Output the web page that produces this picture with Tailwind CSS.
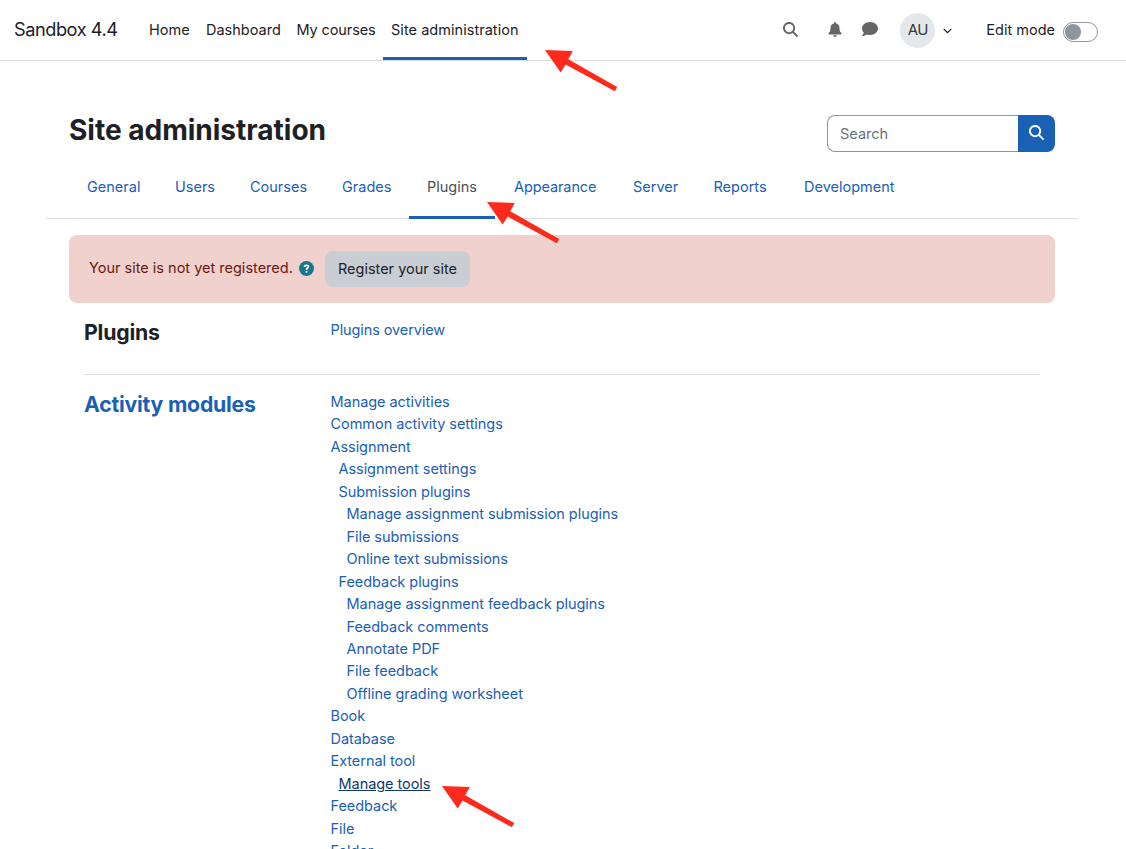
<!DOCTYPE html>
<html lang="en">
<head>
<meta charset="utf-8">
<title>Site administration</title>
<script src="https://cdn.jsdelivr.net/npm/@tailwindcss/browser@4"></script>
</head>
<body class="h-[849px] overflow-hidden bg-white font-['Inter',sans-serif] text-[14.5px] leading-[22.47px] text-[#1d2125]">
<div class="relative h-[849px] overflow-hidden whitespace-nowrap">
<header class="flex h-[61px] items-stretch border-b border-[#d5dbdf]">
  <a class="flex w-[127px] shrink-0 items-center pb-[2px] pl-3.5 text-[18.2px] tracking-[-0.46px]">Sandbox 4.4</a>
  <nav class="ml-3.5 flex">
    <a class="flex w-[57px] items-center pl-2">Home</a>
    <a class="flex w-[90.5px] items-center pl-2">Dashboard</a>
    <a class="flex w-[94.5px] items-center pl-2 tracking-[-0.1px]">My courses</a>
    <a class="flex w-[144px] items-center border-b-[3px] border-[#1a60b4] pt-[3px] pl-2 tracking-[0.04px]">Site administration</a>
  </nav>
  <div class="ml-auto flex items-center text-[#666]">
    <svg class="mr-[30px] mb-[2px] size-[15px]" viewBox="0 0 512 512" fill="currentColor"><path d="M416 208c0 45.9-14.9 88.3-40 122.7L502.6 457.4c12.5 12.5 12.5 32.8 0 45.3s-32.8 12.5-45.3 0L330.7 376c-34.4 25.2-76.8 40-122.7 40C93.1 416 0 322.9 0 208S93.1 0 208 0S416 93.1 416 208zM208 352a144 144 0 1 0 0-288 144 144 0 1 0 0 288z"/></svg>
    <svg class="mr-[20px] mb-px h-[15px] w-[14px]" viewBox="0 0 14 15" fill="currentColor"><path d="M7 0C7.600 0 8 .400 8 .900V1.600C10.300 2.100 11.500 3.800 11.500 6C11.500 8.400 12 9.700 13.200 10.800C13.900 11.500 13.500 12.500 12.700 12.500H1.300C.500 12.500 .100 11.500 .800 10.800C2 9.700 2.500 8.400 2.500 6C2.500 3.800 3.700 2.100 6 1.600V.900C6 .400 6.400 0 7 0ZM5.200 13.300H8.800C8.600 14.400 7.900 14.900 7 14.900S5.400 14.400 5.200 13.300Z"/></svg>
    <svg class="mr-[22px] mb-[2px] size-4" viewBox="0 0 512 512" fill="currentColor"><path d="M512 240c0 114.900-114.600 208-256 208c-37.100 0-72.300-6.400-104.100-17.900C119 454 62 480 16 480c-12 0-18-15-8-25c20-20 44-48 48-85C21 335 0 290 0 240C0 125.100 114.600 32 256 32s256 93.100 256 208z"/></svg>
    <div class="flex size-[35px] items-center justify-center rounded-full bg-[#e4e8eb] text-[15px] tracking-[-0.4px] text-[#343a40]">AU</div>
    <svg class="mx-2 mt-0.5 h-[6px] w-[9px]" viewBox="0 0 9 6" fill="none" stroke="#1d2125" stroke-width="1.3"><path d="M.7.900 4.500 4.700 8.300.900"/></svg>
    <span class="ml-[26px] text-[#1d2125]">Edit mode</span>
    <span class="mt-[3px] mr-7 ml-2 flex h-5 w-[35px] items-center rounded-full border border-[#8f959e] pl-[1px]"><span class="size-4 rounded-full bg-[#8f959e]"></span></span>
  </div>
</header>

<main class="px-[69px] pr-[71px]">
  <div class="flex justify-between pt-[54px]">
    <h1 class="mt-[-2px] text-[28.100px] leading-[34px] font-bold tracking-[-0.04px]">Site administration</h1>
    <div class="flex h-[37px]">
      <div class="flex w-[191px] items-center rounded-l-lg border border-r-0 border-[#8f959e] pt-px pl-3 text-[#6a737b]">Search</div>
      <div class="flex w-[37px] items-center justify-center rounded-r-lg bg-[#1a60b4] pb-[3px] text-white"><svg class="size-[15px]" viewBox="0 0 512 512" fill="currentColor"><path d="M416 208c0 45.900-14.900 88.300-40 122.700L502.600 457.400c12.500 12.500 12.500 32.800 0 45.300s-32.800 12.500-45.300 0L330.700 376c-34.400 25.200-76.800 40-122.700 40C93.100 416 0 322.900 0 208S93.100 0 208 0S416 93.100 416 208zM208 352a144 144 0 1 0 0-288 144 144 0 1 0 0 288z"/></svg></div>
    </div>
  </div>
  <div class="-mx-[23px] mt-1 flex h-[63px] border-b border-[#dcdfe1] pl-[23px] text-[#1a60b4]">
    <a class="w-[88px] pt-5 pl-[18px]">General</a>
    <a class="w-[75px] pt-5 pl-[18px]">Users</a>
    <a class="w-[92px] pt-5 pl-[18px]">Courses</a>
    <a class="w-[85px] pt-5 pl-[18px]">Grades</a>
    <a class="-mb-px w-[87px] pt-5 pl-[18px] text-[#495057] shadow-[inset_-1px_0_0_#fff,inset_0_-3px_0_#1a60b4]">Plugins</a>
    <a class="w-[119px] pt-5 pl-[18px] tracking-[-0.1px]">Appearance</a>
    <a class="w-[80.500px] pt-5 pl-[18px]">Server</a>
    <a class="w-[90.500px] pt-5 pl-[18px]">Reports</a>
    <a class="pt-5 pl-[18px]">Development</a>
  </div>
  <div class="mt-4 flex h-[68px] items-center rounded-lg bg-[#f0d1ce] pl-5 text-[#691911]">
    <span class="mt-[-2px] w-[210px]">Your site is not yet registered.</span>
    <svg class="mb-0.5 size-[15px]" viewBox="0 0 15 15"><circle cx="7.500" cy="7.500" r="7.500" fill="#16788c"/><path d="M5.500 5.900C5.600 3.700 9.500 3.800 9.400 5.800C9.300 7.100 7.500 7 7.500 8.700" fill="none" stroke="#fff" stroke-width="1.700"/><circle cx="7.500" cy="10.800" r="1" fill="#fff"/></svg>
    <span class="ml-[11px] flex h-9 w-[145px] items-center justify-center rounded-lg bg-[#c9cdd4] text-[#1d2125]">Register your site</span>
  </div>
  <section class="mx-[15px] flex h-[72px] border-b border-[#e0e2e3] pt-4">
    <h2 class="w-[246.500px] text-[21.250px] leading-[27px] font-bold tracking-[-0.2px]">Plugins</h2>
    <a class="tracking-[-0.1px] text-[#1a60b4]">Plugins overview</a>
  </section>
  <section class="mx-[15px] flex pt-4 text-[#1a60b4]">
    <h2 class="w-[246.500px] text-[21.250px] leading-[27px] font-bold tracking-[-0.23px]">Activity modules</h2>
    <ul class="leading-[22.455px] tracking-[-0.05px]">
      <li>Manage activities</li>
      <li>Common activity settings</li>
      <li>Assignment</li>
      <li class="pl-2">Assignment settings</li>
      <li class="pl-2">Submission plugins</li>
      <li class="pl-4">Manage assignment submission plugins</li>
      <li class="pl-4">File submissions</li>
      <li class="pl-4">Online text submissions</li>
      <li class="pl-2">Feedback plugins</li>
      <li class="pl-4">Manage assignment feedback plugins</li>
      <li class="pl-4">Feedback comments</li>
      <li class="pl-4">Annotate PDF</li>
      <li class="pl-4">File feedback</li>
      <li class="pl-4">Offline grading worksheet</li>
      <li>Book</li>
      <li>Database</li>
      <li>External tool</li>
      <li class="pl-2 text-[#0f3a6e] underline">Manage tools</li>
      <li>Feedback</li>
      <li>File</li>
      <li>Folder</li>
    </ul>
  </section>
</main>

<!-- pointer arrows -->
<svg class="absolute top-[49px] left-[544px] h-[43px] w-[74px]" viewBox="0 0 74 43" fill="#ff2a1c"><path d="M1 1 28.700 2 24.300 10.300 73.200 38.100 70.900 42.200 21.600 15.500 16.700 23.500Z"/></svg>
<svg class="absolute top-[201px] left-[486px] h-[43px] w-[74px]" viewBox="0 0 74 43" fill="#ff2a1c"><path d="M1 1 28.700 2 24.300 10.300 73.200 38.100 70.900 42.200 21.600 15.500 16.700 23.500Z"/></svg>
<svg class="absolute top-[785px] left-[441px] h-[43px] w-[74px]" viewBox="0 0 74 43" fill="#ff2a1c"><path d="M1 1 28.700 2 24.300 10.300 73.200 38.100 70.900 42.200 21.600 15.500 16.700 23.500Z"/></svg>
</div>
</body>
</html>
